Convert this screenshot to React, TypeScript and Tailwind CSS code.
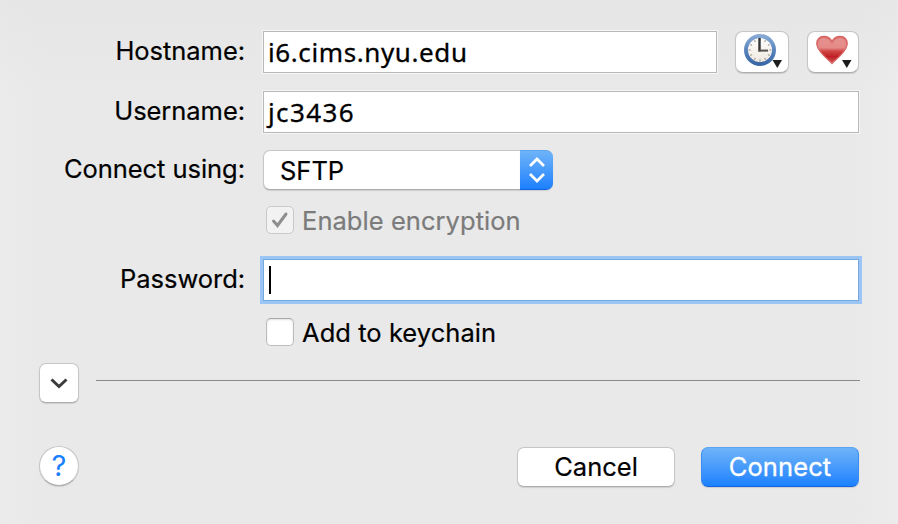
import type { ReactNode } from "react";

const label =
  "w-[245px] shrink-0 -translate-y-px text-right text-[25.5px] leading-8 tracking-[-0.05px] text-black whitespace-nowrap [-webkit-text-stroke:0.2px_black]";
const field =
  "h-[42px] border border-[#b8b8b8] bg-white pl-1 font-['Noto_Sans',sans-serif] text-[26px] leading-10 text-black whitespace-nowrap shadow-[0_0_0_1px_#f6f6f6] [-webkit-text-stroke:0.3px_black]";
const raised = "bg-white border border-[#c6c6c6] border-b-[#adadad] shadow-[0_1px_1px_rgba(0,0,0,0.12)]";

function Row({ className, children }: { className: string; children: ReactNode }) {
  return <div className={"flex " + className}>{children}</div>;
}

function ClockIcon() {
  const ticks = [0, 30, 60, 90, 120, 150, 180, 210, 240, 270, 300, 330];
  return (
    <svg width="44" height="38" viewBox="0 0 44 38" className="block">
      <defs>
        <linearGradient id="rim" x1="0" y1="0" x2="0" y2="1">
          <stop offset="0" stopColor="#86a9d4" />
          <stop offset="0.5" stopColor="#5a86bd" />
          <stop offset="1" stopColor="#3a68a6" />
        </linearGradient>
        <linearGradient id="face" x1="0" y1="0" x2="0" y2="1">
          <stop offset="0" stopColor="#ffffff" />
          <stop offset="1" stopColor="#efe8df" />
        </linearGradient>
      </defs>
      <circle cx="20" cy="18" r="14" fill="url(#face)" stroke="url(#rim)" strokeWidth="4" />
      {ticks.map((a) => (
        <path key={a} d="M20 6.800V8.800" stroke="#a39c94" strokeWidth="1.200" transform={`rotate(${a} 20 18)`} />
      ))}
      <path d="M19.500 6V19.500" stroke="#333333" strokeWidth="2.400" fill="none" />
      <path d="M18.500 18.600H28" stroke="#55524e" strokeWidth="2" fill="none" />
      <path d="M32.500 28h9.500l-4.700 8z" fill="#1c1c1c" />
    </svg>
  );
}

function HeartIcon() {
  return (
    <svg width="44" height="38" viewBox="0 0 44 38" className="block">
      <defs>
        <linearGradient id="heart" x1="0" y1="0" x2="0" y2="1">
          <stop offset="0" stopColor="#dc7270" />
          <stop offset="0.42" stopColor="#e38582" />
          <stop offset="0.55" stopColor="#cf4545" />
          <stop offset="0.75" stopColor="#c01f24" />
          <stop offset="1" stopColor="#d2605f" />
        </linearGradient>
        <linearGradient id="gloss" x1="0" y1="0" x2="0" y2="1">
          <stop offset="0" stopColor="#eba5a3" stopOpacity="0.6" />
          <stop offset="1" stopColor="#e58c89" stopOpacity="0.6" />
        </linearGradient>
      </defs>
      <path d="M20 31.500C17 28 6 20.500 4.800 12.500C4.200 7.500 7.500 4.500 11.800 4.500C15.600 4.500 18.700 6.500 20 9.800C21.300 6.500 24.400 4.500 28.200 4.500C32.500 4.500 35.800 7.500 35.200 12.500C34 20.500 23 28 20 31.500Z" fill="url(#heart)" stroke="#d76664" strokeWidth="1.300" />
      <path d="M6.500 15C5.500 10 7.500 6.300 11.800 6.300C15.500 6.300 18.500 9 20 13C21.500 9 24.500 6.300 28.200 6.300C32.500 6.300 34.500 10 33.500 15C25 17 15 17 6.500 15Z" fill="url(#gloss)" />
      <path d="M30 28h9.500l-4.700 8z" fill="#1c1c1c" />
    </svg>
  );
}

export default function App() {
  return (
    <div className="h-[524px] w-[898px] overflow-hidden bg-[linear-gradient(90deg,#ebebeb_0,#e9e9e9_5%,#e9e9e9_95%,#ececec_100%)] font-['Inter',sans-serif]">
      <div className="flex h-full w-full flex-col bg-[linear-gradient(180deg,rgba(228,228,228,0.6)_0,rgba(232,232,232,0)_18%)] pt-[31px]">
        <Row className="h-[42px] items-center">
          <div className={label}>Hostname:</div>
          <div className={field + " ml-[18px] w-[454px] tracking-[0.6px]"}>i6.cims.nyu.edu</div>
          <button className={raised + " ml-[18px] flex h-[42px] w-[54px] items-start rounded-[8px] pl-1"}>
            <ClockIcon />
          </button>
          <button className={raised + " ml-[18px] flex h-[42px] w-[52px] items-start rounded-[8px] pl-1"}>
            <HeartIcon />
          </button>
        </Row>

        <Row className="mt-[18px] h-[42px] items-center">
          <div className={label}>Username:</div>
          <div className={field + " ml-[18px] w-[596px] tracking-[1.4px]"}>jc3436</div>
        </Row>

        <Row className="mt-[17px] h-10 items-center">
          <div className={label}>Connect using:</div>
          <button className={raised + " ml-[18px] flex h-10 w-[257px] items-center rounded-l-[7px] border-r-0 pl-4 text-[25.5px] leading-8 [-webkit-text-stroke:0.2px_black]"}>
            <span className="translate-y-px">SFTP</span>
          </button>
          <div className="flex h-10 w-[33px] items-center justify-center rounded-r-[7px] border-y border-t-[#5ba4ef] border-b-[#1465e6] bg-linear-to-b from-[#6db3f8] to-[#1a80fe] shadow-[0_1px_1px_rgba(0,0,0,0.12)]">
            <svg width="18" height="26" viewBox="0 0 18 26" fill="none" stroke="white" strokeWidth="2.700">
              <path d="M2 9l7-7 7 7M2 17l7 7 7-7" />
            </svg>
          </div>
        </Row>

        <Row className="mt-4 h-7 items-center pl-[266px]">
          <div className="flex size-7 items-center justify-center rounded-[5px] border border-[#c9c9c9] bg-[#f2f2f2]">
            <svg width="18" height="18" viewBox="0 0 18 18" fill="none" stroke="#8e8e8e" strokeWidth="3" strokeLinecap="round">
              <path d="M2.500 10l4 4.500L15 3" />
            </svg>
          </div>
          <span className="ml-2 translate-y-px text-[25.5px] leading-8 tracking-[0.05px] text-[#7b7b7b] whitespace-nowrap [-webkit-text-stroke:0.2px_#7b7b7b]">
            Enable encryption
          </span>
        </Row>

        <Row className="mt-[25px] h-[42px] items-center">
          <div className={label}>Password:</div>
          <div className="ml-[18px] flex h-[42px] w-[596px] items-center border border-[#77a9df] bg-white pl-[5px] shadow-[0_0_0_3px_#9ac5f4]">
            <div className="h-7 w-0.5 bg-black" />
          </div>
        </Row>

        <Row className="mt-[17px] h-7 items-center pl-[266px]">
          <div className="size-7 rounded-[5px] border border-[#bcbcbc] border-t-[#a8a8a8] bg-white shadow-[inset_0_1px_2px_rgba(0,0,0,0.12)]" />
          <span className="ml-2 translate-y-px text-[25.5px] leading-8 tracking-[0.05px] text-black whitespace-nowrap [-webkit-text-stroke:0.2px_black]">
            Add to keychain
          </span>
        </Row>

        <Row className="mt-[17px] h-10 items-center pl-[39px]">
          <button className={raised + " flex size-10 items-center justify-center rounded-[7px]"}>
            <svg width="18" height="12" viewBox="0 0 18 12" fill="none" stroke="#3b3b3b" strokeWidth="3">
              <path d="M1.500 2.500l7.500 7 7.500-7" />
            </svg>
          </button>
          <div className="mb-[5px] ml-[17px] h-px w-[764px] bg-[#8a8a8a]" />
        </Row>

        <Row className="mt-[43px] h-[42px] items-start pl-[39px]">
          <button className={raised + " flex size-10 items-center justify-center rounded-full text-[29px] leading-8 text-[#1a80fe]"}>?</button>
          <button className={raised + " mt-px ml-[438px] h-10 w-[158px] rounded-[7px] text-[25.5px] leading-8 [-webkit-text-stroke:0.2px_black]"}>
            Cancel
          </button>
          <button className="mt-px ml-[26px] h-10 w-[158px] rounded-[7px] border border-[#3b8df0] border-t-[#5ba4ef] border-b-[#1465e6] bg-linear-to-b from-[#6db3f8] to-[#1a80fe] text-[25.5px] leading-8 tracking-[0.1px] text-white shadow-[0_1px_1px_rgba(0,0,0,0.12)] [-webkit-text-stroke:0.3px_white]">
            Connect
          </button>
        </Row>
      </div>
    </div>
  );
}
